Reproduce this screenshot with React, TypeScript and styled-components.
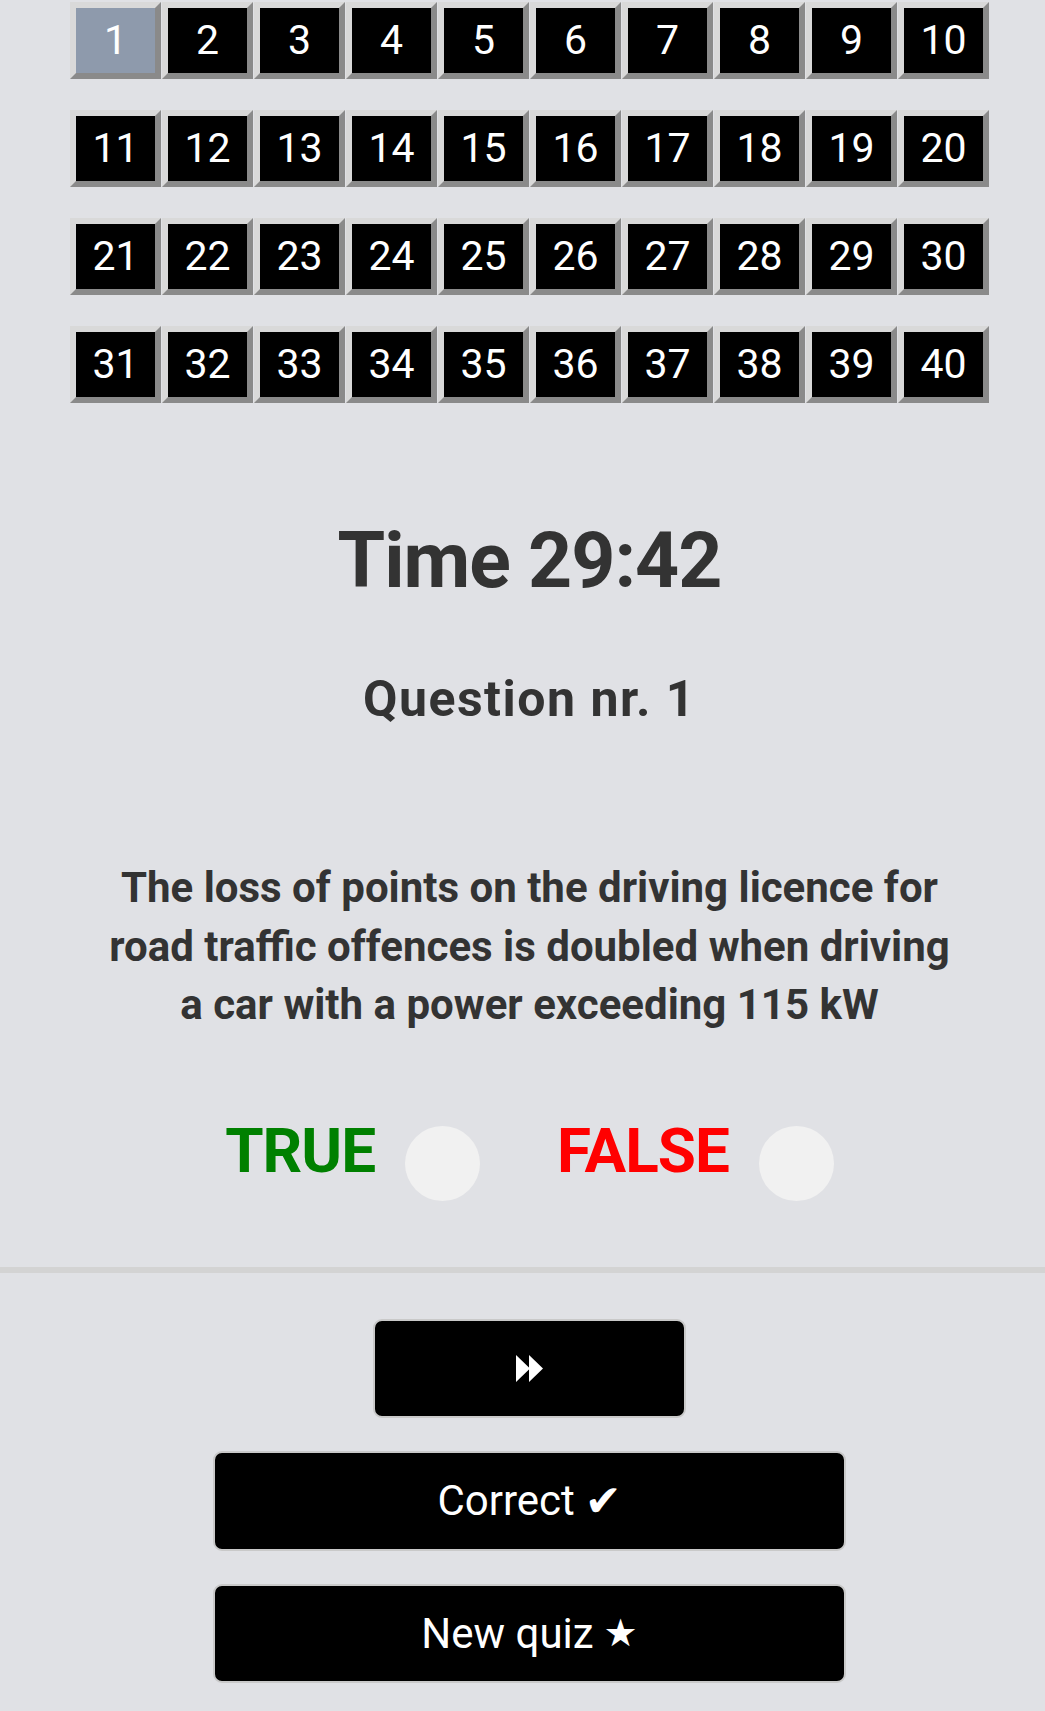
import React from "react";
import styled, { createGlobalStyle } from "styled-components";

const GlobalStyle = createGlobalStyle`
  html, body {
    margin: 0;
    padding: 0;
    background: #e0e1e5;
  }
  body {
    font-family: Roboto, "Liberation Sans", Arial, sans-serif;
    color: #333;
  }
  * { box-sizing: border-box; }
`;

const Page = styled.div`
  display: flex;
  flex-direction: column;
  padding-top: 2px;
  padding-bottom: 29px;
`;

const Section = styled.section`
  display: flex;
  flex-direction: column;
  align-items: center;
  padding-left: 14px;
`;

const Grid = styled.div`
  display: grid;
  grid-template-columns: repeat(10, 91px);
  column-gap: 1px;
  row-gap: 31px;
`;

const Cell = styled.button<{ $active?: boolean }>`
  width: 91px;
  height: 77px;
  padding: 0;
  border: 6px solid;
  border-color: #d9d9d9 #8a8a8a #8a8a8a #d9d9d9;
  background: ${(p) => (p.$active ? "#8e9aac" : "#000")};
  color: #fff;
  font-family: Roboto, sans-serif;
  font-size: 41px;
  line-height: 1;
  display: flex;
  align-items: center;
  justify-content: center;
  cursor: pointer;
`;

const Timer = styled.h1`
  margin: 112px 0 0;
  font-size: 77px;
  line-height: 92px;
  font-weight: 700;
  letter-spacing: -1px;
  color: #333;
`;

const QuestionNr = styled.h2`
  margin: 62px 0 0;
  font-size: 50px;
  line-height: 60px;
  font-weight: 700;
  letter-spacing: 1.5px;
  color: #333;
`;

const QuestionText = styled.p`
  margin: 130px 0 0;
  width: 860px;
  text-align: center;
  font-size: 42px;
  line-height: 58.5px;
  font-weight: 700;
  color: #333;
`;

const Answers = styled.div`
  margin-top: 85px;
  display: flex;
  align-items: flex-start;
  gap: 77px;
`;

const Answer = styled.label`
  display: flex;
  align-items: flex-start;
  gap: 30px;
`;

const AnswerLabel = styled.span<{ $color: string }>`
  font-size: 62px;
  line-height: 1;
  font-weight: 700;
  letter-spacing: -1px;
  color: ${(p) => p.$color};
`;

const Radio = styled.input`
  appearance: none;
  -webkit-appearance: none;
  margin: 6px 0 0;
  width: 75px;
  height: 75px;
  border-radius: 50%;
  border: none;
  background: #f1f1f1;
`;

const Separator = styled.hr`
  margin: 66px 0 0;
  border: none;
  height: 6px;
  width: 100%;
  background: #d3d3d3;
`;

const ActionButton = styled.button<{ $width: number; $height: number; $top: number }>`
  margin-top: ${(p) => p.$top}px;
  width: ${(p) => p.$width}px;
  height: ${(p) => p.$height}px;
  background: #000;
  color: #fff;
  border: 2px solid #c9c9c9;
  border-radius: 9px;
  font-family: Roboto, sans-serif;
  font-size: 42px;
  display: flex;
  align-items: center;
  justify-content: center;
  gap: 10px;
  cursor: pointer;
`;

const Glyph = styled.span<{ $size: number }>`
  font-family: "DejaVu Sans", sans-serif;
  font-size: ${(p) => p.$size}px;
  line-height: 1;
`;

const ForwardIcon = () => (
  <svg width="27" height="27" viewBox="0 0 27 27" aria-hidden="true">
    <path d="M0 0 L14 13.5 L0 27 Z M13 0 L27 13.5 L13 27 Z" fill="#fff" />
  </svg>
);

export default function App() {
  const numbers = Array.from({ length: 40 }, (_, i) => i + 1);
  return (
    <>
      <GlobalStyle />
      <Page>
        <Section>
          <Grid>
            {numbers.map((n) => (
              <Cell key={n} $active={n === 1}>
                {n}
              </Cell>
            ))}
          </Grid>
          <Timer>Time 29:42</Timer>
          <QuestionNr>Question nr. 1</QuestionNr>
          <QuestionText>
            The loss of points on the driving licence for road traffic offences is doubled when driving a car with a
            power exceeding 115 kW
          </QuestionText>
          <Answers>
            <Answer>
              <AnswerLabel $color="#008000">TRUE</AnswerLabel>
              <Radio type="radio" name="answer" />
            </Answer>
            <Answer>
              <AnswerLabel $color="#ff0000">FALSE</AnswerLabel>
              <Radio type="radio" name="answer" />
            </Answer>
          </Answers>
        </Section>
        <Separator />
        <Section>
          <ActionButton $width={313} $height={99} $top={46} aria-label="Next">
            <ForwardIcon />
          </ActionButton>
          <ActionButton $width={633} $height={100} $top={33}>
            Correct<Glyph $size={44}>✔</Glyph>
          </ActionButton>
          <ActionButton $width={633} $height={99} $top={33}>
            New quiz<Glyph $size={38}>★</Glyph>
          </ActionButton>
        </Section>
      </Page>
    </>
  );
}
